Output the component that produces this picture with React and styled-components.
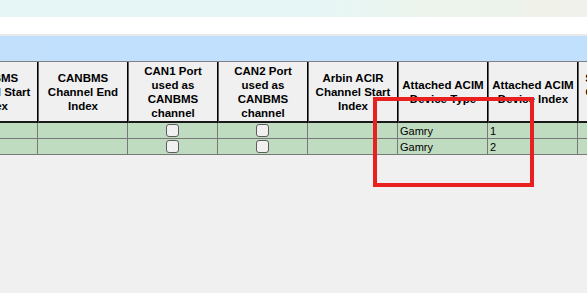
import styled, { createGlobalStyle } from "styled-components";

const GlobalStyle = createGlobalStyle`
    html, body {
        margin: 0;
        padding: 0;
        background-color: #f0f0f0;
        font-family: "Liberation Sans", Arial, sans-serif;
    }
`

const columns = [
    { title: ["CANBMS", "Channel Start", "Index"] },
    { title: ["CANBMS", "Channel End", "Index"] },
    { title: ["CAN1 Port", "used as", "CANBMS", "channel"], check: true },
    { title: ["CAN2 Port", "used as", "CANBMS", "channel"], check: true },
    { title: ["Arbin ACIR", "Channel Start", "Index"] },
    { title: ["Attached ACIM", "Device Type"], key: "type" },
    { title: ["Attached ACIM", "Device Index"], key: "index" },
    { title: ["Smart Battery", "Channel Start", "Index"] },
];

const rows = [
    { type: "Gamry", index: "1" },
    { type: "Gamry", index: "2" },
];

export default function App() {
    return (
        <>
            <GlobalStyle />
            <Page>
                <TopBand />
                <WhiteBand />
                <Divider />
                <TitleBar />
                <GridWrap>
                    <Grid>
                        <thead>
                            <tr>
                                {columns.map((col, i) => (
                                    <HeadCell key={i}>
                                        {col.title.map((line, j) => (
                                            <span key={j}>{line}{j < col.title.length - 1 && <br />}</span>
                                        ))}
                                    </HeadCell>
                                ))}
                            </tr>
                        </thead>
                        <tbody>
                            {rows.map((row, r) => (
                                <tr key={r}>
                                    {columns.map((col, i) => (
                                        <Cell key={i} $center={col.check}>
                                            {col.check ? <Check type="checkbox" readOnly /> : (col.key ? row[col.key] : "")}
                                        </Cell>
                                    ))}
                                </tr>
                            ))}
                        </tbody>
                    </Grid>
                </GridWrap>
                <Highlight />
            </Page>
        </>
    )
}

const Page = styled.div`
    position: relative;
    width: 587px;
    height: 293px;
    overflow: hidden;
    background-color: #f0f0f0;
`

const TopBand = styled.div`
    height: 17px;
    background: linear-gradient(to right, #e6f6f6 0%, #e6f6f6 52%, #eaf5f0 66%, #ecf4ec 72%, #ecf3ea 88%, #f0f2ea 90%, #f0f1ea 100%);
`

const WhiteBand = styled.div`
    height: 17px;
    background-color: #ffffff;
`

const Divider = styled.div`
    height: 2px;
    background-color: #e8e8e8;
`

const TitleBar = styled.div`
    height: 25px;
    background: linear-gradient(to right, #c2e0fc 0%, #c2e0fc 7.8%, #c0e0fe 7.8%, #c0e0fe 100%);
`

/* the grid is scrolled a little to the right, so its first column is half hidden */
const GridWrap = styled.div`
    margin-left: -52px;
`

const Grid = styled.table`
    table-layout: fixed;
    width: 720px;
    border-collapse: separate;
    border-spacing: 0;
    border-top: 1px solid #808080;
`

const HeadCell = styled.th`
    box-sizing: border-box;
    width: 90px;
    height: 61px;
    padding: 0 2px;
    background-color: #f0f0f0;
    border-left: 1px solid #606060;
    border-right: 1px solid #000000;
    border-bottom: 2px solid #1a1a1a;
    font-size: 11.5px;
    font-weight: 700;
    line-height: 14px;
    color: #000;
    text-align: center;
    vertical-align: middle;
    white-space: nowrap;
`

const Cell = styled.td`
    box-sizing: border-box;
    height: 16px;
    padding: 0 2px;
    background-color: #c0dcc0;
    border-right: 1px solid #787878;
    border-bottom: 1px solid #787878;
    font-size: 11px;
    line-height: 14px;
    color: #000;
    text-align: ${p => p.$center ? "center" : "left"};
    vertical-align: middle;
`

const Check = styled.input`
    appearance: none;
    display: block;
    margin: 0 auto;
    box-sizing: border-box;
    width: 13px;
    height: 13px;
    border: 1px solid #5c5c5c;
    border-radius: 3px;
    background-color: #f0f0f0;
`

const Highlight = styled.div`
    position: absolute;
    left: 373px;
    top: 97px;
    width: 161px;
    height: 90px;
    box-sizing: border-box;
    border: 4px solid #e82020;
    pointer-events: none;
`
